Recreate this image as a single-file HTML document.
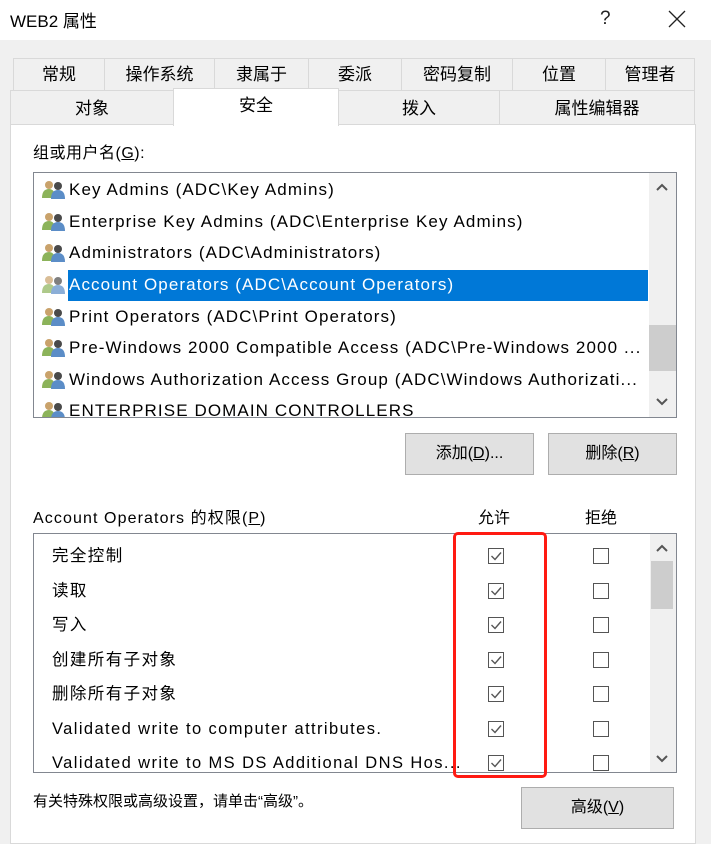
<html><head><style>
body{margin:0;width:711px;height:832px;background:#f0f0f0;position:relative;overflow:hidden;font-family:"Liberation Sans","Noto Sans CJK SC",sans-serif;color:#000}
.a{position:absolute}
.tab{position:absolute;border:1px solid #d9d9d9;background:#f0f0f0;font-size:17px;text-align:center;box-sizing:border-box}
.btn{position:absolute;background:#e1e1e1;border:1px solid #adadad;box-sizing:border-box;font-size:16px;text-align:center}
.row{position:absolute;left:8px;font-size:17px;letter-spacing:1.1px;white-space:nowrap;height:28px;line-height:28px}
.ic{display:inline-block;width:24px;height:20px;vertical-align:-4px;margin-right:3px}
.pr{position:absolute;left:18px;font-size:16.5px;letter-spacing:1.4px;white-space:nowrap;line-height:20px;height:20px}
.cb{position:absolute;width:16px;height:16px;border:1.5px solid #555;box-sizing:border-box;background:#fff}
</style></head><body>
<div class="a" style="left:0;top:0;width:711px;height:40px;background:#fff"></div>
<div class="a" style="left:10px;top:7px;font-size:17px">WEB2 属性</div>
<div class="a" style="left:600px;top:8px;font-size:19px;color:#222">?</div>
<svg class="a" style="left:668px;top:10px" width="18" height="18"><path d="M1 1L17 17M17 1L1 17" stroke="#222" stroke-width="1.3"/></svg>

<div class="tab" style="left:13px;top:58px;width:92px;height:33px;line-height:31px">常规</div>
<div class="tab" style="left:104px;top:58px;width:111px;height:33px;line-height:31px">操作系统</div>
<div class="tab" style="left:214px;top:58px;width:95px;height:33px;line-height:31px">隶属于</div>
<div class="tab" style="left:308px;top:58px;width:94px;height:33px;line-height:31px">委派</div>
<div class="tab" style="left:401px;top:58px;width:112px;height:33px;line-height:31px">密码复制</div>
<div class="tab" style="left:512px;top:58px;width:94px;height:33px;line-height:31px">位置</div>
<div class="tab" style="left:605px;top:58px;width:90px;height:33px;line-height:31px">管理者</div>
<div class="tab" style="left:10px;top:90px;width:164px;height:35px;line-height:35px">对象</div>
<div class="tab" style="left:338px;top:90px;width:162px;height:35px;line-height:35px">拨入</div>
<div class="tab" style="left:499px;top:90px;width:196px;height:35px;line-height:35px">属性编辑器</div>
<div class="a" style="left:10px;top:124px;width:686px;height:720px;background:#fff;border:1px solid #d9d9d9;box-sizing:border-box"></div>
<div class="tab" style="left:173px;top:88px;width:166px;height:38px;line-height:34px;background:#fff;border-bottom:none">安全</div>

<div class="a" style="left:33px;top:139px;font-size:16px;letter-spacing:0.5px">组或用户名(<u>G</u>):</div>
<div class="a" style="left:33px;top:172px;width:644px;height:246px;border:1px solid #828790;box-sizing:border-box;overflow:hidden">
<svg width="0" height="0" style="position:absolute"><defs><g id="u"><circle cx="7" cy="6" r="4" fill="#c9a26b"/><path d="M0 19Q0 10 7 10Q13 10 13 19Z" fill="#8cb35a"/><circle cx="16" cy="7" r="4" fill="#4a4a4a"/><path d="M9 20Q9 11 16 11Q23 11 23 20Z" fill="#5b8dc7"/></g></defs></svg>
<div class="row" style="top:3px"><svg class="ic"><use href="#u"/></svg>Key Admins (ADC\Key Admins)</div>
<div class="row" style="top:35px"><svg class="ic"><use href="#u"/></svg>Enterprise Key Admins (ADC\Enterprise Key Admins)</div>
<div class="row" style="top:66px"><svg class="ic"><use href="#u"/></svg>Administrators (ADC\Administrators)</div>
<div class="a" style="left:34px;top:97px;width:580px;height:31px;background:#0078d7"></div>
<div class="row" style="top:98px;color:#fff"><svg class="ic" style="opacity:.7"><use href="#u"/></svg>Account Operators (ADC\Account Operators)</div>
<div class="row" style="top:130px"><svg class="ic"><use href="#u"/></svg>Print Operators (ADC\Print Operators)</div>
<div class="row" style="top:161px"><svg class="ic"><use href="#u"/></svg>Pre-Windows 2000 Compatible Access (ADC\Pre-Windows 2000 ...</div>
<div class="row" style="top:193px"><svg class="ic"><use href="#u"/></svg>Windows Authorization Access Group (ADC\Windows Authorizati...</div>
<div class="row" style="top:224px"><svg class="ic"><use href="#u"/></svg>ENTERPRISE DOMAIN CONTROLLERS</div>
<div class="a" style="left:615px;top:0;width:28px;height:246px;background:#f0f0f0"></div>
<div class="a" style="left:615px;top:152px;width:28px;height:46px;background:#cdcdcd"></div>
<svg class="a" style="left:622px;top:10px" width="12" height="8"><path d="M1 7L6 2L11 7" stroke="#555" stroke-width="2" fill="none"/></svg>
<svg class="a" style="left:622px;top:225px" width="12" height="8"><path d="M1 1L6 6L11 1" stroke="#555" stroke-width="2" fill="none"/></svg>
</div>

<div class="btn" style="left:405px;top:433px;width:129px;height:42px;line-height:40px">添加(<u>D</u>)...</div>
<div class="btn" style="left:548px;top:433px;width:129px;height:42px;line-height:40px">删除(<u>R</u>)</div>

<div class="a" style="left:33px;top:504px;font-size:16px;letter-spacing:1.1px">Account Operators 的权限(<u>P</u>)</div>
<div class="a" style="left:478px;top:504px;font-size:16px">允许</div>
<div class="a" style="left:585px;top:504px;font-size:16px">拒绝</div>
<div class="a" style="left:33px;top:533px;width:644px;height:240px;border:1px solid #828790;box-sizing:border-box;overflow:hidden">
<div class="pr" style="top:12px">完全控制</div>
<div class="pr" style="top:47px">读取</div>
<div class="pr" style="top:81px">写入</div>
<div class="pr" style="top:116px">创建所有子对象</div>
<div class="pr" style="top:150px">删除所有子对象</div>
<div class="pr" style="top:185px">Validated write to computer attributes.</div>
<div class="pr" style="top:219px">Validated write to MS DS Additional DNS Hos...</div>
<div class="a" style="left:616px;top:0;width:27px;height:240px;background:#f0f0f0"></div>
<div class="a" style="left:617px;top:27px;width:22px;height:48px;background:#cdcdcd"></div>
<svg class="a" style="left:622px;top:10px" width="12" height="8"><path d="M1 7L6 2L11 7" stroke="#555" stroke-width="2" fill="none"/></svg>
<svg class="a" style="left:622px;top:221px" width="12" height="8"><path d="M1 1L6 6L11 1" stroke="#555" stroke-width="2" fill="none"/></svg>
</div>
<div id="cbs"></div>
<script>
var h='';var ys=[548,583,617,652,686,721,755];
ys.forEach(function(y){h+='<div class="cb" style="left:488px;top:'+y+'px"></div><svg class="a" style="left:488px;top:'+y+'px" width="16" height="16"><path d="M3.5 8L7 11.5L13 4.5" stroke="#555" stroke-width="1.4" fill="none"/></svg><div class="cb" style="left:593px;top:'+y+'px"></div>';});
document.getElementById('cbs').innerHTML=h;
</script>
<div class="a" style="left:453px;top:532px;width:94px;height:246px;border:3px solid #ff1a12;border-radius:5px;box-sizing:border-box"></div>

<div class="a" style="left:33px;top:790px;font-size:15px">有关特殊权限或高级设置，请单击“高级”。</div>
<div class="btn" style="left:521px;top:787px;width:153px;height:42px;line-height:40px">高级(<u>V</u>)</div>
</body></html>
